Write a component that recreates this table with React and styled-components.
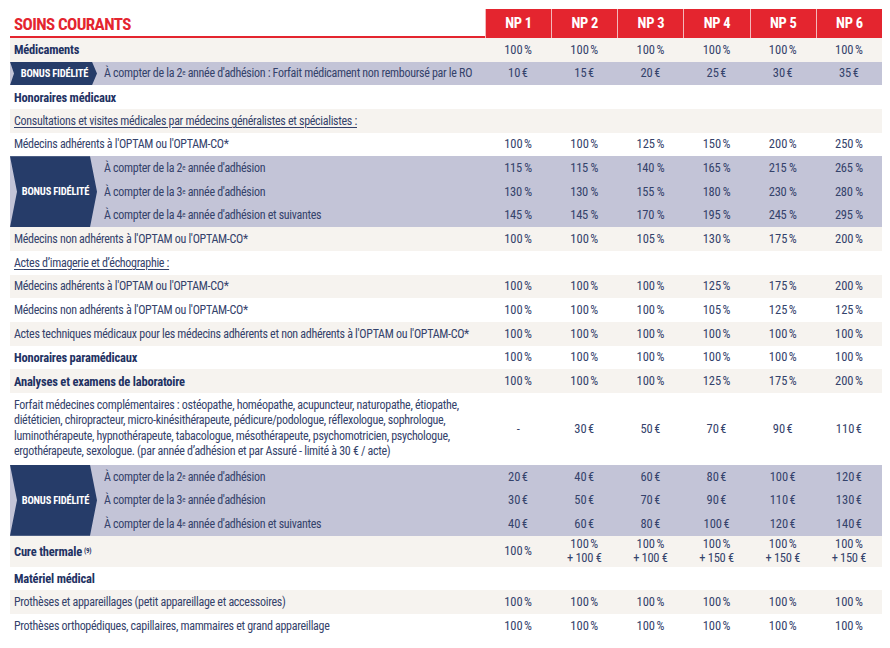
import React from "react";
import styled, { createGlobalStyle, css } from "styled-components";

const FONT = `"Liberation Sans Narrow", "Arial Narrow", "Roboto Condensed", Roboto, "Liberation Sans", sans-serif`;
const RED = "#e4252f";
const NAVY = "#1f3263";
const TEXT = "#34426b";
const BEIGE = "#f6f3ef";
const LAV = "#c3c4d7";
const BADGE = "#263c69";
const ROW_H = "23.67px";
const COLS = "475px repeat(6, 1fr)";

const Global = createGlobalStyle`
  html, body { margin: 0; padding: 0; background: #fff; }
  body { font-family: ${FONT}; color: ${TEXT}; }
`;

const Page = styled.div`
  width: 872px;
  margin: 9px 0 0 10px;
  font-family: ${FONT};
`;

const HeaderRow = styled.div`
  display: grid;
  grid-template-columns: ${COLS};
  height: 29px;
`;

const Title = styled.div`
  display: flex;
  align-items: center;
  padding: 3px 0 0 4px;
  color: ${RED};
  font-weight: 700;
  font-size: 17px;
  letter-spacing: -0.6px;
  border-bottom: 2px solid ${RED};
`;

const NpCell = styled.div`
  display: flex;
  align-items: center;
  justify-content: center;
  background: ${RED};
  color: #fff;
  font-weight: 700;
  font-size: 14.5px;
  letter-spacing: -0.3px;
  border-left: 1px solid #f3b8bb;
`;

const bgFor = (v) => (v === "beige" ? BEIGE : v === "lav" ? LAV : "#fff");

const Row = styled.div`
  display: grid;
  grid-template-columns: ${COLS};
  height: ${(p) => p.$h || ROW_H};
  background: ${(p) => bgFor(p.$bg)};
`;

const Label = styled.div`
  display: flex;
  align-items: center;
  padding-left: 4px;
  white-space: nowrap;
  font-size: ${(p) => (p.$bold ? "12.5px" : "12px")};
  letter-spacing: ${(p) => (p.$bold ? "-0.2px" : "-0.3px")};
  font-weight: ${(p) => (p.$bold ? 700 : 400)};
  color: ${(p) => (p.$bold ? NAVY : TEXT)};
  ${(p) =>
    p.$underline &&
    css`
      text-decoration: underline;
      text-underline-offset: 2px;
    `}
`;

const Para = styled.div`
  display: flex;
  flex-direction: column;
  justify-content: center;
  padding-left: 4px;
  font-size: 12px;
  letter-spacing: -0.3px;
  line-height: 15.6px;
  color: ${TEXT};
  white-space: nowrap;
`;

const Sup = styled.sup`
  font-size: 7px;
  font-weight: 700;
  vertical-align: 5px;
  margin-left: 2px;
`;

const Val = styled.div`
  display: flex;
  flex-direction: column;
  align-items: center;
  justify-content: center;
  text-align: center;
  font-size: 12.5px;
  letter-spacing: -0.3px;
  line-height: 14px;
  color: ${TEXT};
`;

const BonusGroup = styled.div`
  display: grid;
  grid-template-columns: 87px 388px repeat(6, 1fr);
  grid-template-rows: repeat(${(p) => p.$n}, ${ROW_H});
  background: ${LAV};
`;

const Badge = styled.div`
  grid-column: 1;
  grid-row: 1 / -1;
  display: flex;
  align-items: center;
  justify-content: center;
  padding-left: ${(p) => (p.$tall ? "4px" : "2px")};
  background: ${BADGE};
  color: #fff;
  font-weight: 700;
  font-size: 10.5px;
  letter-spacing: -0.2px;
  clip-path: ${(p) =>
    p.$tall
      ? "polygon(0 0, 80px 0, 100% 50%, 80px 100%, 0 100%, 7px 50%)"
      : "polygon(0 0, 82px 0, 100% 50%, 82px 100%, 0 100%, 4px 50%)"};
`;

const BonusLabel = styled.div`
  grid-column: 2;
  display: flex;
  align-items: center;
  padding-left: 7px;
  font-size: 12px;
  letter-spacing: -0.3px;
  color: ${TEXT};
  white-space: nowrap;
`;

const Ord = styled.sup`
  font-size: 7px;
  vertical-align: 5px;
`;

const Values = ({ vals }) =>
  vals.map((v, i) => (
    <Val key={i}>
      {Array.isArray(v) ? v.map((l, j) => <span key={j}>{l}</span>) : v}
    </Val>
  ));

const P = (n) => `${n}\u202f%`;
const PS = (n) => `${n} %`;
const E = (n) => `${n}\u202f€`;

const Bonus = ({ rows, tall }) => (
  <BonusGroup $n={rows.length}>
    <Badge $tall={tall}>BONUS FIDÉLITÉ</Badge>
    {rows.map((r, i) => (
      <React.Fragment key={i}>
        <BonusLabel style={{ gridRow: i + 1 }}>{r.label}</BonusLabel>
        {r.vals.map((v, j) => (
          <Val key={j} style={{ gridRow: i + 1 }}>
            {v}
          </Val>
        ))}
      </React.Fragment>
    ))}
  </BonusGroup>
);

const Year = ({ n, suffix }) => (
  <>
    À compter de la {n}
    <Ord>e</Ord>&nbsp;année d'adhésion{suffix}
  </>
);

const all = (v) => Array(6).fill(v);
const blank = all("");

const forfaitLines = [
  "Forfait médecines complémentaires : ostéopathe, homéopathe, acupuncteur, naturopathe, étiopathe,",
  "diététicien, chiropracteur, micro-kinésithérapeute, pédicure/podologue, réflexologue, sophrologue,",
  "luminothérapeute, hypnothérapeute, tabacologue, mésothérapeute, psychomotricien, psychologue,",
  "ergothérapeute, sexologue. (par année d’adhésion et par Assuré - limité à 30 € / acte)",
];

export default function App() {
  return (
    <>
      <Global />
      <Page>
        <HeaderRow>
          <Title>SOINS COURANTS</Title>
          {[1, 2, 3, 4, 5, 6].map((n) => (
            <NpCell key={n}>NP {n}</NpCell>
          ))}
        </HeaderRow>

        <Row $bg="beige">
          <Label $bold>Médicaments</Label>
          <Values vals={all(P(100))} />
        </Row>

        <Bonus
          rows={[
            {
              label: (
                <Year
                  n={2}
                  suffix=" : Forfait médicament non remboursé par le RO"
                />
              ),
              vals: [10, 15, 20, 25, 30, 35].map(E),
            },
          ]}
        />

        <Row>
          <Label $bold>Honoraires médicaux</Label>
          <Values vals={blank} />
        </Row>
        <Row $bg="beige">
          <Label $underline>
            Consultations et visites médicales par médecins généralistes et
            spécialistes :
          </Label>
          <Values vals={blank} />
        </Row>
        <Row>
          <Label>Médecins adhérents à l'OPTAM ou l'OPTAM-CO*</Label>
          <Values vals={[100, 100, 125, 150, 200, 250].map(P)} />
        </Row>

        <Bonus
          tall
          rows={[
            { label: <Year n={2} />, vals: [115, 115, 140, 165, 215, 265].map(PS) },
            { label: <Year n={3} />, vals: [130, 130, 155, 180, 230, 280].map(PS) },
            {
              label: <Year n={4} suffix=" et suivantes" />,
              vals: [145, 145, 170, 195, 245, 295].map(PS),
            },
          ]}
        />

        <Row $bg="beige">
          <Label>Médecins non adhérents à l'OPTAM ou l'OPTAM-CO*</Label>
          <Values vals={[100, 100, 105, 130, 175, 200].map(P)} />
        </Row>
        <Row>
          <Label $underline>Actes d’imagerie et d’échographie :</Label>
          <Values vals={blank} />
        </Row>
        <Row $bg="beige">
          <Label>Médecins adhérents à l'OPTAM ou l'OPTAM-CO*</Label>
          <Values vals={[100, 100, 100, 125, 175, 200].map(P)} />
        </Row>
        <Row>
          <Label>Médecins non adhérents à l'OPTAM ou l'OPTAM-CO*</Label>
          <Values vals={[100, 100, 100, 105, 125, 125].map(P)} />
        </Row>
        <Row $bg="beige">
          <Label>
            Actes techniques médicaux pour les médecins adhérents et non
            adhérents à l'OPTAM ou l'OPTAM-CO*
          </Label>
          <Values vals={all(P(100))} />
        </Row>
        <Row>
          <Label $bold>Honoraires paramédicaux</Label>
          <Values vals={all(P(100))} />
        </Row>
        <Row $bg="beige">
          <Label $bold>Analyses et examens de laboratoire</Label>
          <Values vals={[100, 100, 100, 125, 175, 200].map(P)} />
        </Row>
        <Row $h="72px">
          <Para>
            {forfaitLines.map((l, i) => (
              <span key={i}>{l}</span>
            ))}
          </Para>
          <Values vals={["-", ...[30, 50, 70, 90, 110].map(E)]} />
        </Row>

        <Bonus
          tall
          rows={[
            { label: <Year n={2} />, vals: [20, 40, 60, 80, 100, 120].map(E) },
            { label: <Year n={3} />, vals: [30, 50, 70, 90, 110, 130].map(E) },
            {
              label: <Year n={4} suffix=" et suivantes" />,
              vals: [40, 60, 80, 100, 120, 140].map(E),
            },
          ]}
        />

        <Row $bg="beige" $h="31px">
          <Label $bold>
            Cure thermale<Sup>(9)</Sup>
          </Label>
          <Values
            vals={[
              P(100),
              [P(100), "+ 100 €"],
              [P(100), "+ 100 €"],
              [P(100), "+ 150 €"],
              [P(100), "+ 150 €"],
              [P(100), "+ 150 €"],
            ]}
          />
        </Row>
        <Row>
          <Label $bold>Matériel médical</Label>
          <Values vals={blank} />
        </Row>
        <Row $bg="beige">
          <Label>Prothèses et appareillages (petit appareillage et accessoires)</Label>
          <Values vals={all(P(100))} />
        </Row>
        <Row>
          <Label>
            Prothèses orthopédiques, capillaires, mammaires et grand
            appareillage
          </Label>
          <Values vals={all(P(100))} />
        </Row>
      </Page>
    </>
  );
}
